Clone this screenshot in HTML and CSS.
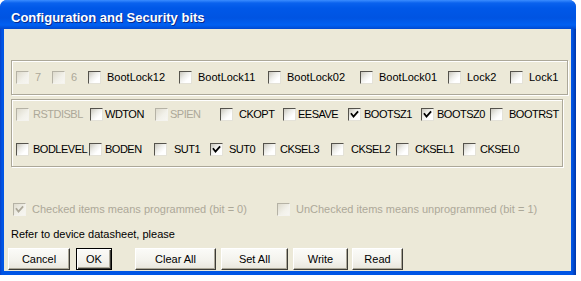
FILE: index.html
```html
<!DOCTYPE html>
<html>
<head>
<meta charset="utf-8">
<link rel="stylesheet" href="styles.css">
</head>
<body>
<div class="window">
  <div class="titlebar"><span class="title">Configuration and Security bits</span></div>
  <div class="client">
    <div class="group g1">
      <div class="row r1">
        <label class="cb dis"><span class="box"></span><span class="txt">7</span></label>
        <label class="cb dis"><span class="box"></span><span class="txt">6</span></label>
        <label class="cb"><span class="box"></span><span class="txt">BootLock12</span></label>
        <label class="cb"><span class="box"></span><span class="txt">BootLock11</span></label>
        <label class="cb"><span class="box"></span><span class="txt">BootLock02</span></label>
        <label class="cb"><span class="box"></span><span class="txt">BootLock01</span></label>
        <label class="cb"><span class="box"></span><span class="txt">Lock2</span></label>
        <label class="cb"><span class="box"></span><span class="txt">Lock1</span></label>
      </div>
    </div>
    <div class="group g2">
      <div class="row r2 caps">
        <label class="cb dis t4"><span class="box"></span><span class="txt">RSTDISBL</span></label>
        <label class="cb t2"><span class="box"></span><span class="txt">WDTON</span></label>
        <label class="cb dis t2"><span class="box"></span><span class="txt">SPIEN</span></label>
        <label class="cb"><span class="box"></span><span class="txt">CKOPT</span></label>
        <label class="cb t2"><span class="box"></span><span class="txt">EESAVE</span></label>
        <label class="cb t3"><span class="box on"><svg viewBox="0 0 11 11" width="11" height="11"><polyline points="2.5,5 4.5,7.5 8.5,3" /></svg></span><span class="txt">BOOTSZ1</span></label>
        <label class="cb t3"><span class="box on"><svg viewBox="0 0 11 11" width="11" height="11"><polyline points="2.5,5 4.5,7.5 8.5,3" /></svg></span><span class="txt">BOOTSZ0</span></label>
        <label class="cb"><span class="box"></span><span class="txt">BOOTRST</span></label>
      </div>
      <div class="row r3 caps">
        <label class="cb t4"><span class="box"></span><span class="txt">BODLEVEL</span></label>
        <label class="cb t3"><span class="box"></span><span class="txt">BODEN</span></label>
        <label class="cb t7"><span class="box"></span><span class="txt">SUT1</span></label>
        <label class="cb"><span class="box on"><svg viewBox="0 0 11 11" width="11" height="11"><polyline points="2.5,5 4.5,7.5 8.5,3" /></svg></span><span class="txt">SUT0</span></label>
        <label class="cb t4"><span class="box"></span><span class="txt">CKSEL3</span></label>
        <label class="cb t7"><span class="box"></span><span class="txt">CKSEL2</span></label>
        <label class="cb"><span class="box"></span><span class="txt">CKSEL1</span></label>
        <label class="cb t4"><span class="box"></span><span class="txt">CKSEL0</span></label>
      </div>
    </div>
    <div class="legend">
      <label class="cb dis lg1"><span class="box on"><svg viewBox="0 0 11 11" width="11" height="11"><polyline points="2.5,5 4.5,7.5 8.5,3" /></svg></span><span class="txt">Checked items means programmed (bit = 0)</span></label>
      <label class="cb dis"><span class="box"></span><span class="txt">UnChecked items means unprogrammed (bit = 1)</span></label>
    </div>
    <div class="note">Refer to device datasheet, please</div>
    <div class="buttons">
      <button class="btn b-cancel">Cancel</button>
      <button class="btn b-ok">OK</button>
      <button class="btn b-clear">Clear All</button>
      <button class="btn b-set">Set All</button>
      <button class="btn b-write">Write</button>
      <button class="btn b-read">Read</button>
    </div>
  </div>
</div>
</body>
</html>
```
FILE: styles.css
```css
html, body {
  margin: 0;
  padding: 0;
  background: #ffffff;
}

body {
  font-family: "Liberation Sans", Arial, sans-serif;
  font-size: 11px;
  color: #000;
}

.window {
  width: 576px;
  height: 275px;
  display: flex;
  flex-direction: column;
  background: linear-gradient(to right, #0841c8 0px, #0055e5 2px, #0055e5 572px, #0036a8 576px);
  border-radius: 7px 7px 0 0;
  overflow: hidden;
}

.titlebar {
  height: 29px;
  flex: none;
  box-sizing: border-box;
  padding: 10px 0 0 11px;
  background: linear-gradient(to bottom, #3b8dff 0px, #0a62ee 3px, #0058e8 8px, #0054e2 18px, #0060f2 25px, #0049d0 29px);
}

.title {
  display: block;
  font-family: "Liberation Sans", Arial, sans-serif;
  font-weight: bold;
  font-size: 13px;
  line-height: 15px;
  color: #fff;
  text-shadow: 1px 1px 0 #0a2a8a;
}

.client {
  flex: 1;
  margin: 0 5px 4px 4px;
  background: #ece9d8;
  display: flex;
  flex-direction: column;
}

.group {
  border: 1px solid #aca899;
  box-shadow: inset 1px 1px 0 #fff, 1px 1px 0 #fff;
  box-sizing: border-box;
  padding-left: 4px;
}

.g1 {
  margin: 31px 0 0 7px;
  width: 557px;
  height: 35px;
  padding-top: 8px;
}

.g2 {
  margin: 4px 0 0 7px;
  width: 552px;
  height: 68px;
  padding-top: 6px;
  display: flex;
  flex-direction: column;
  gap: 18px;
}

.row {
  display: grid;
  height: 17px;
  align-items: center;
}

.r1 { grid-template-columns: 36px 36px 91px 89px 92px 88px 62px auto; }
.r2 { grid-template-columns: 74px 65px 65px 63px 65px 73px 69px auto; }
.r3 { grid-template-columns: 73px 65px 56px 53px 68px 65px 67px auto; }

.caps .txt {
  letter-spacing: -0.5px;
}

.cb {
  display: flex;
  align-items: center;
  gap: 6px;
  white-space: nowrap;
  line-height: 13px;
}

.cb.t2 { gap: 2px; }
.cb.t3 { gap: 3px; }
.cb.t4 { gap: 4px; }
.cb.t7 { gap: 7px; }

.box {
  width: 13px;
  height: 13px;
  box-sizing: border-box;
  flex: none;
  border-style: solid;
  border-width: 1px;
  border-color: #55534c #e4e2d8 #e4e2d8 #55534c;
  background: linear-gradient(135deg, #c9c7bd 0%, #eeeeea 40%, #ffffff 70%);
  display: flex;
  align-items: center;
  justify-content: center;
}

.box svg {
  display: block;
}

.box polyline {
  fill: none;
  stroke: #000;
  stroke-width: 1.8;
  stroke-linecap: square;
}

.dis .txt {
  color: #aca899;
}

.dis .box {
  border-color: #b5b2a5 #f4f3ee #f4f3ee #b5b2a5;
  background: linear-gradient(135deg, #dedbcd 0%, #f2f1ea 60%, #f7f6f2 100%);
}

.dis .box polyline {
  stroke: #aca899;
}

.legend {
  display: flex;
  align-items: center;
  height: 17px;
  margin-top: 34px;
  padding-left: 9px;
}

.lg1 {
  width: 264px;
}

.note {
  margin: 10px 0 0 7px;
  line-height: 13px;
}

.buttons {
  display: flex;
  margin-top: 7px;
  height: 22px;
}

.btn {
  font-family: "Liberation Sans", Arial, sans-serif;
  font-size: 11px;
  color: #000;
  height: 22px;
  padding: 0;
  box-sizing: border-box;
  background: linear-gradient(to bottom, #fbfbf8 0%, #f3f2ec 60%, #e8e6dc 100%);
  border: 1px solid;
  border-color: #ffffff #3c3b36 #3c3b36 #ffffff;
  box-shadow: inset -1px -1px 0 #aca899;
}

.b-ok {
  border-color: #000;
  box-shadow: inset 1px 1px 0 #fff, inset -1px -1px 0 #3c3b36, inset -2px -2px 0 #aca899;
}

.b-cancel { margin-left: 4px; width: 62px; }
.b-ok { margin-left: 6px; width: 36px; }
.b-clear { margin-left: 23px; width: 81px; }
.b-set { margin-left: 5px; width: 67px; }
.b-write { margin-left: 5px; width: 55px; }
.b-read { margin-left: 4px; width: 51px; }
```
